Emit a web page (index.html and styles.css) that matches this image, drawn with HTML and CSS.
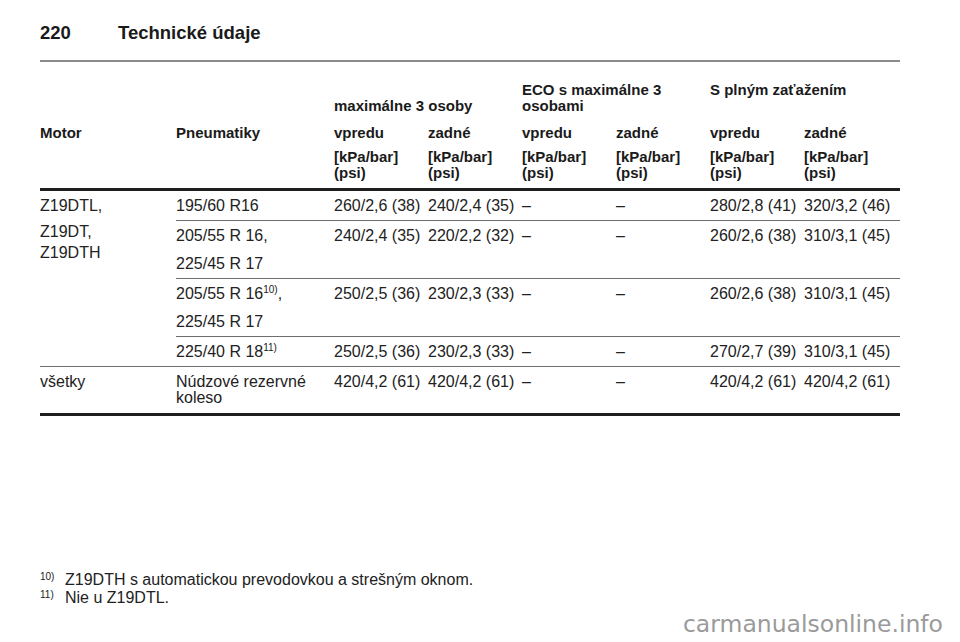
FILE: index.html
```html
<!DOCTYPE html>
<html lang="sk">
<head>
<meta charset="utf-8">
<title>Technické údaje</title>
<link rel="stylesheet" href="styles.css">
</head>
<body>
<div class="page">
  <header class="page-head">
    <span class="page-num">220</span><span class="page-title">Technické údaje</span>
  </header>
  <div class="rule"></div>
  <table class="spec">
    <colgroup>
      <col class="c-motor"><col class="c-tyre"><col class="c-val"><col class="c-val"><col class="c-val"><col class="c-val"><col class="c-val"><col class="c-last">
    </colgroup>
    <thead>
      <tr class="h-group">
        <th></th><th></th>
        <th colspan="2" class="align-bottom">maximálne 3 osoby</th>
        <th colspan="2">ECO s maximálne 3<br>osobami</th>
        <th colspan="2">S plným zaťažením</th>
      </tr>
      <tr class="h-axle">
        <th>Motor</th><th>Pneumatiky</th>
        <th>vpredu</th><th>zadné</th><th>vpredu</th><th>zadné</th><th>vpredu</th><th>zadné</th>
      </tr>
      <tr class="h-unit">
        <th></th><th></th>
        <th>[kPa/bar]<br>(psi)</th><th>[kPa/bar]<br>(psi)</th><th>[kPa/bar]<br>(psi)</th><th>[kPa/bar]<br>(psi)</th><th>[kPa/bar]<br>(psi)</th><th>[kPa/bar]<br>(psi)</th>
      </tr>
    </thead>
    <tbody>
      <tr>
        <td rowspan="4" class="motor">
          <div class="m1">Z19DTL,</div>
          <div class="m2">Z19DT,<br>Z19DTH</div>
        </td>
        <td>195/60 R16</td>
        <td>260/2,6 (38)</td><td>240/2,4 (35)</td><td>–</td><td>–</td><td>280/2,8 (41)</td><td>320/3,2 (46)</td>
      </tr>
      <tr>
        <td><div class="p">205/55 R 16,</div><div class="p">225/45 R 17</div></td>
        <td>240/2,4 (35)</td><td>220/2,2 (32)</td><td>–</td><td>–</td><td>260/2,6 (38)</td><td>310/3,1 (45)</td>
      </tr>
      <tr>
        <td><div class="p">205/55 R 16<sup>10)</sup>,</div><div class="p">225/45 R 17</div></td>
        <td>250/2,5 (36)</td><td>230/2,3 (33)</td><td>–</td><td>–</td><td>260/2,6 (38)</td><td>310/3,1 (45)</td>
      </tr>
      <tr>
        <td>225/40 R 18<sup>11)</sup></td>
        <td>250/2,5 (36)</td><td>230/2,3 (33)</td><td>–</td><td>–</td><td>270/2,7 (39)</td><td>310/3,1 (45)</td>
      </tr>
      <tr class="last">
        <td>všetky</td>
        <td class="wrap">Núdzové rezervné koleso</td>
        <td>420/4,2 (61)</td><td>420/4,2 (61)</td><td>–</td><td>–</td><td>420/4,2 (61)</td><td>420/4,2 (61)</td>
      </tr>
    </tbody>
  </table>
  <div class="notes">
    <div class="note-num">10)</div><div class="note-text">Z19DTH s automatickou prevodovkou a strešným oknom.</div>
    <div class="note-num">11)</div><div class="note-text">Nie u Z19DTL.</div>
  </div>
  <div class="watermark">carmanualsonline.info</div>
</div>
</body>
</html>
```

FILE: styles.css
```css
html, body {
  margin: 0;
  padding: 0;
  background: #ffffff;
}

.page {
  position: relative;
  width: 960px;
  height: 642px;
  overflow: hidden;
  padding: 0 60px 0 40px;
  box-sizing: border-box;
  font-family: "Liberation Sans", Arial, sans-serif;
  color: #1e1e1e;
}

.page-head {
  padding-top: 21px;
  height: 24px;
  line-height: 24px;
  font-size: 18.5px;
  font-weight: bold;
  color: #1a1a1a;
  white-space: nowrap;
}

.page-num {
  display: inline-block;
  width: 78px;
}

.rule {
  margin-top: 15px;
  height: 0;
  border-top: 2px solid #8a8a8a;
}

.spec {
  width: 860px;
  table-layout: fixed;
  border-collapse: collapse;
  border-spacing: 0;
}

.c-motor { width: 136px; }
.c-tyre { width: 158px; }
.c-val { width: 94px; }
.c-last { width: 96px; }

.spec th,
.spec td {
  padding: 0;
  text-align: left;
  vertical-align: top;
  line-height: 16px;
}

.spec th {
  font-size: 15px;
  font-weight: bold;
  color: #1a1a1a;
}

.spec td {
  font-size: 16px;
  font-weight: normal;
  color: #222222;
  white-space: nowrap;
  padding: 7px 0 6px;
  border-bottom: 1px solid #6e6e6e;
}

.spec td.wrap {
  white-space: normal;
  padding-right: 8px;
}

.h-group th {
  padding: 20px 0 5px;
}

.h-group th.align-bottom {
  vertical-align: bottom;
}

.h-axle th {
  padding: 6px 0 4px;
}

.h-unit th {
  padding: 4px 0 7px;
  border-bottom: 3px solid #1e1e1e;
}

.spec tr.last td {
  padding-bottom: 7px;
  border-bottom: 3px solid #1e1e1e;
}

.spec .p + .p {
  margin-top: 12px;
}

.motor .m1 {
  line-height: 16px;
}

.motor .m2 {
  margin-top: 7px;
  line-height: 21px;
}

.spec sup {
  font-size: 10px;
  line-height: 0;
  vertical-align: 6px;
}

.notes {
  margin-top: 155px;
  display: grid;
  grid-template-columns: 25px 1fr;
  font-size: 16px;
  line-height: 18px;
  color: #222222;
}

.note-num {
  font-size: 10px;
  line-height: 12px;
}

.watermark {
  position: absolute;
  top: 612px;
  right: 17px;
  font-family: "DejaVu Sans", sans-serif;
  font-size: 23.5px;
  line-height: 24px;
  color: #9a9a9a;
  white-space: nowrap;
}
```
